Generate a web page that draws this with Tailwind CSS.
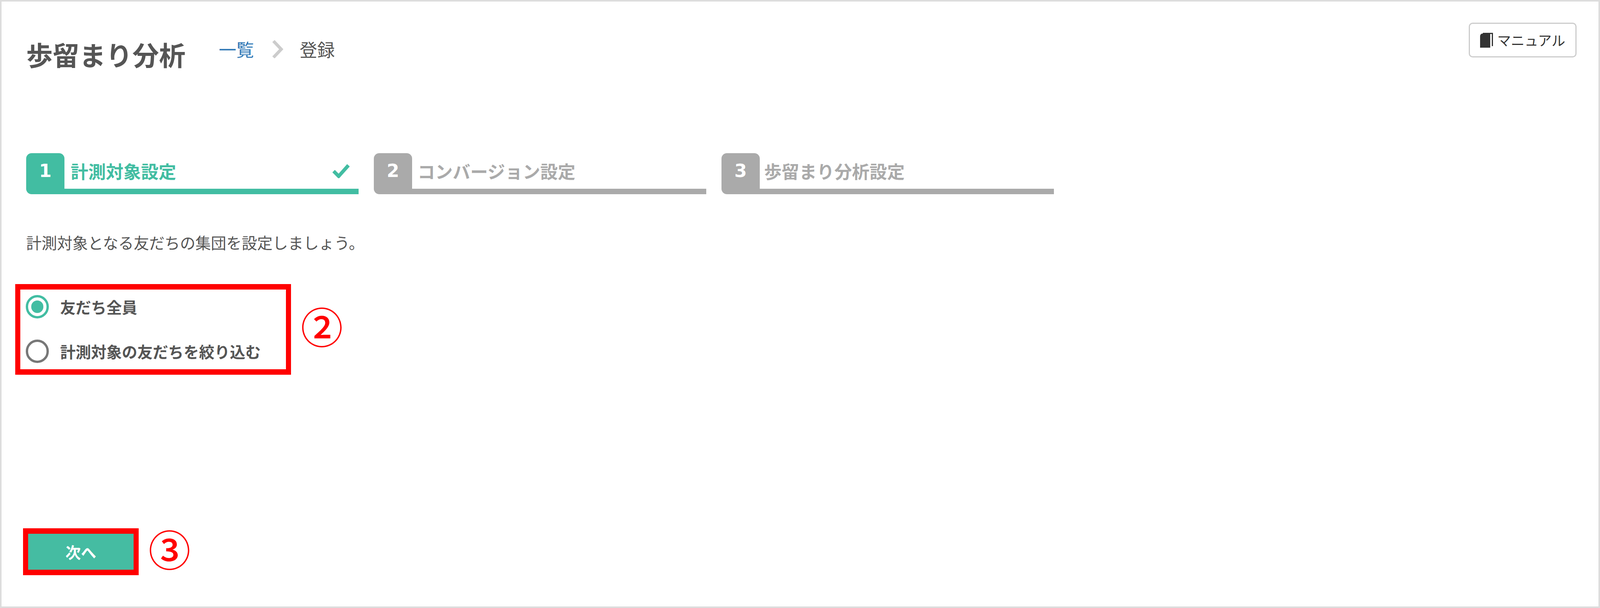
<!DOCTYPE html>
<html lang="ja">
<head>
  <meta charset="UTF-8">
  <title>歩留まり分析</title>
  <script src="https://cdn.jsdelivr.net/npm/@tailwindcss/browser@4"></script>
</head>
<body class="bg-white font-['Noto_Sans_CJK_JP',sans-serif] text-[#555]">
  <div class="w-full h-screen border-4 border-[#ddd] pl-[63px] pr-[56px] flex flex-col">

    <!-- ヘッダー -->
    <div class="h-[388px] flex items-start">
      <h1 class="mt-[87px] text-[68px] leading-[96px] font-bold">歩留まり分析</h1>
      <nav class="mt-[86px] ml-[85px] flex items-center text-[45px] leading-[72px]">
        <a class="text-[#337ab7]">一覧</a>
        <svg class="ml-[46px] w-[29px] h-[46px]" viewBox="0 0 29 46" fill="none"><path d="M4 2 L24 23 L4 44" stroke="#ccc" stroke-width="8"/></svg>
        <span class="ml-[42px]">登録</span>
      </nav>
      <button class="ml-auto mt-[54px] w-[276px] h-[89px] border-[3px] border-[#ccc] rounded-[10px] flex items-center justify-center gap-[11px] text-[35px] text-[#333]">
        <svg class="w-[33px] h-[38px]" viewBox="0 0 33 38"><path d="M0 10 Q0 2 6 2 H26 V38 H0 Z" fill="#333"/><path d="M7 1.5 H31.5 V34" fill="none" stroke="#333" stroke-width="3"/></svg>
        <span>マニュアル</span>
      </button>
    </div>

    <!-- ステップ -->
    <div class="flex gap-[39px]">
      <div class="w-[851px] h-[105px] flex">
        <div class="w-[98px] h-full pb-[14px] bg-[#42bda2] rounded-t-[14px] rounded-bl-[14px] flex items-center justify-center text-white font-['DejaVu_Sans'] font-bold text-[46px]">1</div>
        <div class="flex-1 border-b-[14px] border-[#42bda2] pl-[16px] pr-[23px] flex items-center justify-between text-[#42bda2] font-bold text-[45px]">
          <span>計測対象設定</span>
          <svg class="w-[44px] h-[36px]" viewBox="0 0 44 36" fill="none"><path d="M3 18 L16 31 L41 3" stroke="#42bda2" stroke-width="9"/></svg>
        </div>
      </div>
      <div class="w-[851px] h-[105px] flex">
        <div class="w-[98px] h-full pb-[14px] bg-[#aaa] rounded-t-[14px] rounded-bl-[14px] flex items-center justify-center text-white font-['DejaVu_Sans'] font-bold text-[46px]">2</div>
        <div class="flex-1 border-b-[14px] border-[#aaa] pl-[14px] flex items-center text-[#aaa] font-bold text-[45px]">コンバージョン設定</div>
      </div>
      <div class="w-[851px] h-[105px] flex">
        <div class="w-[98px] h-full pb-[14px] bg-[#aaa] rounded-t-[14px] rounded-bl-[14px] flex items-center justify-center text-white font-['DejaVu_Sans'] font-bold text-[46px]">3</div>
        <div class="flex-1 border-b-[14px] border-[#aaa] pl-[11px] flex items-center text-[#aaa] font-bold text-[45px]">歩留まり分析設定</div>
      </div>
    </div>

    <p class="mt-[93px] text-[39.5px] leading-[60px]">計測対象となる友だちの集団を設定しましょう。</p>

    <!-- 計測対象 -->
    <div class="mt-[77px] flex items-start">
      <div class="-ml-[28px] w-[706px] h-[232px] border-x-[13px] border-y-[14px] border-[#f00] pl-[14px] pt-[14px] flex flex-col gap-[54px] font-bold text-[39.5px]">
        <label class="flex items-center gap-[29px] h-[60px]">
          <span class="w-[59px] h-[60px] border-[6px] border-[#42bda2] rounded-full flex items-center justify-center"><span class="w-[31px] h-[32px] bg-[#42bda2] rounded-full"></span></span>
          <span>友だち全員</span>
        </label>
        <label class="flex items-center gap-[29px] h-[60px]">
          <span class="w-[59px] h-[60px] border-[6px] border-[#777] rounded-full"></span>
          <span>計測対象の友だちを絞り込む</span>
        </label>
      </div>
      <span class="ml-[25px] mt-[35px] text-[#f00] text-[108px] leading-[140px] font-medium">②</span>
    </div>

    <!-- 次へ -->
    <div class="mt-[393px] flex items-start">
      <div class="-ml-[8px] w-[296px] h-[120px] border-x-[13px] border-y-[14px] border-[#f00]">
        <button class="w-full h-full bg-[#45bca2] text-white font-bold text-[39.5px]">次へ</button>
      </div>
      <span class="ml-[25px] -mt-[20px] text-[#f00] text-[108px] leading-[140px] font-medium">③</span>
    </div>
  </div>
</body>
</html>
